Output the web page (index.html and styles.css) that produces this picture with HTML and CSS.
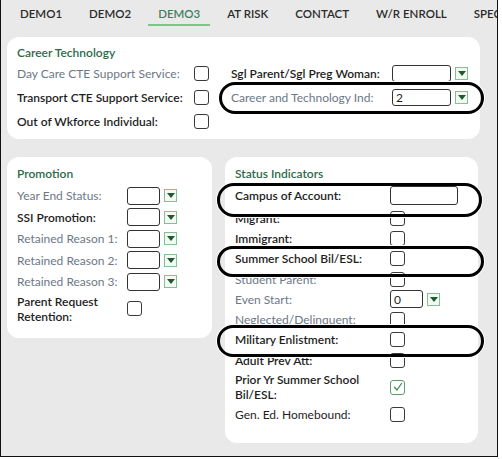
FILE: index.html
```html
<!DOCTYPE html>
<html>
<head>
<meta charset="utf-8">
<link rel="stylesheet" href="styles.css">
</head>
<body>
<div class="frame">
  <nav class="tabs">
    <span class="tab">DEMO1</span>
    <span class="tab">DEMO2</span>
    <span class="tab active">DEMO3</span>
    <span class="tab">AT RISK</span>
    <span class="tab">CONTACT</span>
    <span class="tab">W/R ENROLL</span>
    <span class="tab">SPEC</span>
  </nav>
  <div class="content">
    <section class="panel career">
      <div class="ptitle">Career Technology</div>
      <div class="career-grid">
        <span class="lbl muted">Day Care CTE Support Service:</span>
        <span class="cell"><span class="cb"></span></span>
        <span class="lbl bold">Sgl Parent/Sgl Preg Woman:</span>
        <span class="cell"><span class="sel wide"></span><span class="arrow"></span></span>

        <span class="lbl bold">Transport CTE Support Service:</span>
        <span class="cell"><span class="cb"></span></span>
        <span class="lbl muted">Career and Technology Ind:</span>
        <span class="cell"><span class="sel wide">2</span><span class="arrow"></span></span>

        <span class="lbl bold">Out of Wkforce Individual:</span>
        <span class="cell"><span class="cb"></span></span>
        <span></span>
        <span></span>
      </div>
    </section>
    <div class="lower">
      <section class="panel promo">
        <div class="ptitle">Promotion</div>
        <div class="rows">
          <div class="row"><span class="lbl muted">Year End Status:</span><span class="cell"><span class="sel"></span><span class="arrow"></span></span></div>
          <div class="row"><span class="lbl bold">SSI Promotion:</span><span class="cell"><span class="sel"></span><span class="arrow"></span></span></div>
          <div class="row"><span class="lbl muted">Retained Reason 1:</span><span class="cell"><span class="sel"></span><span class="arrow"></span></span></div>
          <div class="row"><span class="lbl muted">Retained Reason 2:</span><span class="cell"><span class="sel"></span><span class="arrow"></span></span></div>
          <div class="row"><span class="lbl muted">Retained Reason 3:</span><span class="cell"><span class="sel"></span><span class="arrow"></span></span></div>
          <div class="row two"><span class="lbl bold narrow">Parent Request Retention:</span><span class="cell"><span class="cb"></span></span></div>
        </div>
      </section>
      <section class="panel status">
        <div class="ptitle">Status Indicators</div>
        <div class="rows">
          <div class="row campus"><span class="lbl bold">Campus of Account:</span><span class="cell"><span class="txt"></span></span></div>
          <div class="row s"><span class="lbl bold">Migrant:</span><span class="cell"><span class="cb"></span></span></div>
          <div class="row s"><span class="lbl bold">Immigrant:</span><span class="cell"><span class="cb"></span></span></div>
          <div class="row s"><span class="lbl bold">Summer School Bil/ESL:</span><span class="cell"><span class="cb"></span></span></div>
          <div class="row s"><span class="lbl muted">Student Parent:</span><span class="cell"><span class="cb"></span></span></div>
          <div class="row s"><span class="lbl muted">Even Start:</span><span class="cell"><span class="sel">0</span><span class="arrow"></span></span></div>
          <div class="row s"><span class="lbl muted">Neglected/Delinquent:</span><span class="cell"><span class="cb"></span></span></div>
          <div class="row s"><span class="lbl bold">Military Enlistment:</span><span class="cell"><span class="cb"></span></span></div>
          <div class="row s"><span class="lbl bold">Adult Prev Att:</span><span class="cell"><span class="cb"></span></span></div>
          <div class="row two"><span class="lbl bold">Prior Yr Summer School Bil/ESL:</span><span class="cell"><span class="cb checked"><svg viewBox="0 0 14 14" width="14" height="14"><path d="M3.5 7.2 L6 10 L10.5 3.5" fill="none" stroke="#3f8a55" stroke-width="1.3" stroke-linecap="round" stroke-linejoin="round"/></svg></span></span></div>
          <div class="row s"><span class="lbl dark">Gen. Ed. Homebound:</span><span class="cell"><span class="cb"></span></span></div>
        </div>
      </section>
    </div>
  </div>
  <div class="oval o1"></div>
  <div class="oval o2"></div>
  <div class="oval o3"></div>
  <div class="oval o4"></div>
</div>
</body>
</html>
```
FILE: styles.css
```css
* { box-sizing: border-box; }
html, body { margin: 0; padding: 0; background: #ffffff; }
body { font-family: Lato, "Open Sans", sans-serif; font-size: 12px; color: #222; }

.frame {
  position: relative;
  width: 498px;
  height: 457px;
  background: #e9e9e9;
  border-left: 1px solid #111;
  border-right: 1px solid #111;
  border-bottom: 1px solid #111;
  overflow: hidden;
}

.tabs {
  display: flex;
  height: 30px;
  padding-left: 9px;
  white-space: nowrap;
}
.tab {
  font-weight: 600;
  font-size: 11.5px;
  color: #2b2b2b;
  padding: 7px 10px 0 10px;
  margin-right: 7px;
  height: 26px;
}
.tab.active {
  color: #3f7f62;
  border-bottom: 2px solid #7cc68b;
}

.content {
  padding: 7px 0 0 6px;
}
.panel {
  background: #fff;
  border-radius: 12px;
}
.ptitle {
  color: #2c6a4a;
  font-weight: 600;
  font-size: 12px;
  line-height: 16px;
}
.lbl { line-height: 15px; }
.muted { color: #6c7887; }
.bold { font-weight: 600; color: #1e1e1e; }
.dark { color: #1e1e1e; }

.career {
  width: 473px;
  padding: 8px 0 6px 10px;
}
.career-grid {
  display: grid;
  grid-template-columns: 177px 37px 161px auto;
  grid-auto-rows: 24px;
  align-items: center;
}
.cell { display: flex; align-items: center; }

.cb {
  display: inline-block;
  width: 15px;
  height: 15px;
  border: 1px solid #3a3a3a;
  border-radius: 3px;
  background: #fff;
}
.cb.checked { border-color: #5c9c6c; }
.cb svg { display: block; margin: -0.5px; }

.sel {
  display: inline-flex;
  align-items: center;
  width: 33px;
  height: 18px;
  border: 1px solid #333;
  border-radius: 3px;
  background: #fff;
  padding-left: 3px;
  color: #222;
  font-size: 12px;
}
.sel.wide { width: 59px; height: 17px; }
.arrow {
  position: relative;
  display: inline-block;
  width: 13px;
  height: 13px;
  margin-left: 4px;
  border: 1px solid #86bf92;
  background: #f3f9f3;
}
.arrow::after {
  content: "";
  position: absolute;
  left: 1.5px;
  top: 3px;
  border-left: 4px solid transparent;
  border-right: 4px solid transparent;
  border-top: 5px solid #1d5a2e;
}
.txt {
  display: inline-block;
  width: 68px;
  height: 19px;
  border: 1px solid #333;
  border-radius: 3px;
  background: #fff;
}

.lower {
  display: flex;
  align-items: flex-start;
  gap: 13px;
  margin-top: 18px;
}
.promo {
  width: 205px;
  padding: 9px 0 14px 10px;
}
.promo .rows { margin-top: 3px; }
.row {
  display: grid;
  align-items: center;
}
.promo .row {
  grid-template-columns: 110px auto;
  height: 21.5px;
}
.promo .row.two { height: 30px; margin-top: 1px; }
.status {
  width: 253px;
  padding: 9px 0 18px 10px;
}
.status .row { grid-template-columns: 155px auto; }
.status .row.campus { height: 26px; }
.status .row.s { height: 20.3px; }
.status .row.two { height: 34px; }
.row.two .lbl { width: 140px; }
.row.two .lbl.narrow { width: 100px; }

.oval {
  position: absolute;
  border: 3px solid #000;
  border-radius: 18px;
  box-shadow: 0 0 0 1px #fff;
}
.o1 { left: 218px; top: 82px; width: 265px; height: 32px; }
.o2 { left: 216px; top: 183px; width: 265px; height: 34px; }
.o3 { left: 216px; top: 246px; width: 267px; height: 31px; }
.o4 { left: 216px; top: 325px; width: 267px; height: 32px; }
```
